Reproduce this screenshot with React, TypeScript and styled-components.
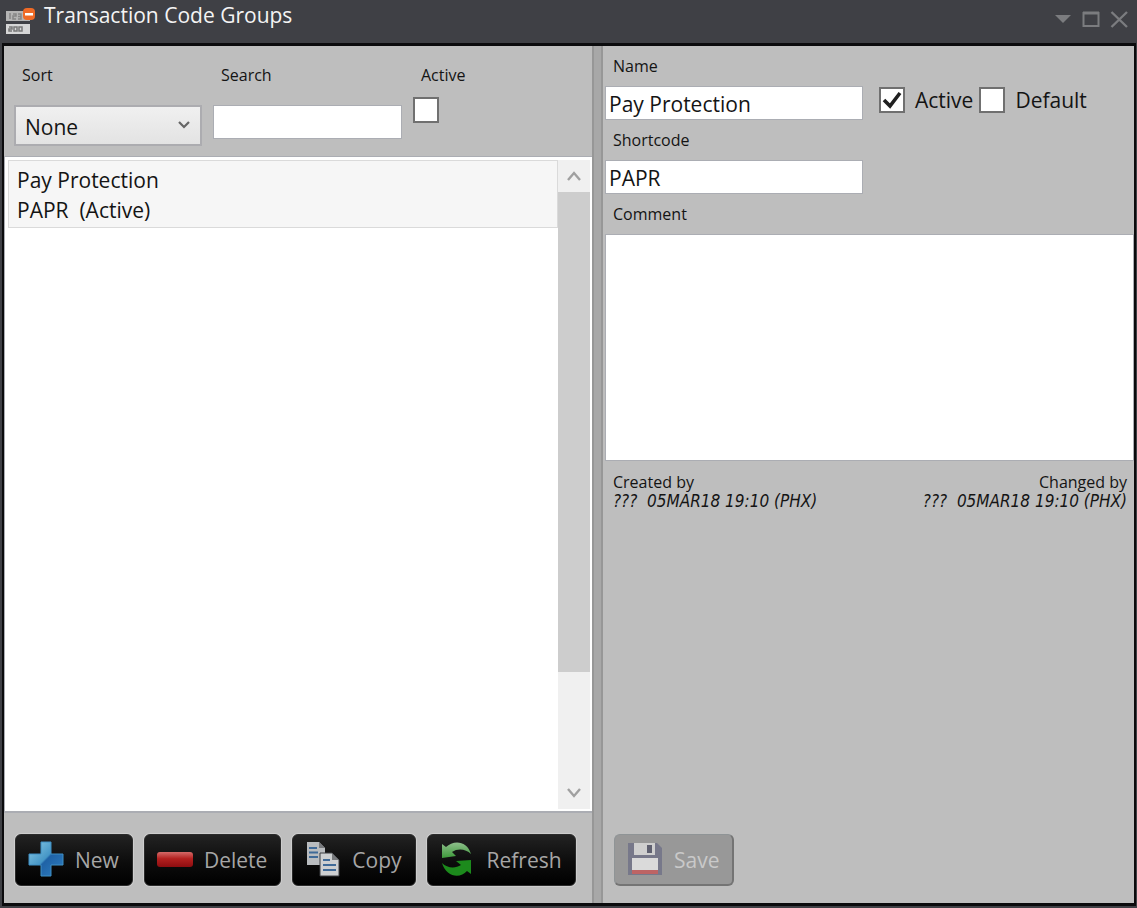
import React, { useState } from "react";
import styled, { createGlobalStyle, css } from "styled-components";

const GlobalStyle = createGlobalStyle`
  *, *::before, *::after { box-sizing: border-box; }
  html, body { margin: 0; padding: 0; background: #3f4045; }
  body, button, input, select, textarea {
    font-family: "Open Sans", "Noto Sans", sans-serif;
    font-size: 21px;
    line-height: 30px;
    color: #141414;
  }
`;

const Window = styled.main`
  display: flex;
  flex-direction: column;
  min-height: 100vh;
  padding: 0 1px 2px 2px;
  background: #3f4045;
`;

const TitleBar = styled.header`
  display: flex;
  align-items: flex-start;
  height: 43px;
  padding: 0 7px 0 4px;
`;

const TitleIcon = styled.svg`
  flex: none;
  width: 31px;
  height: 31px;
  margin-top: 6px;
`;

const Title = styled.h1`
  flex: 1;
  margin: 0;
  padding-left: 7px;
  font-size: 21px;
  font-weight: 400;
  line-height: 30px;
  color: #f4f4f4;
`;

const WindowControls = styled.div`
  display: flex;
  gap: 8px;
  padding-top: 9px;
`;

const ControlButton = styled.button`
  display: flex;
  width: 20px;
  height: 20px;
  padding: 0;
  border: 0;
  background: none;
`;

const Body = styled.div`
  flex: 1;
  display: grid;
  grid-template-columns: minmax(0, 588fr) 11px minmax(0, 531fr);
  border: solid #0b0b0d;
  border-width: 3px 2px 3px 2px;
  background: #bebebe;
`;

const Pane = styled.section`
  display: flex;
  flex-direction: column;
  min-width: 0;
`;

const DetailPane = styled(Pane)`
  padding-left: 2px;
`;

const Splitter = styled.div`
  border: solid #979797;
  border-width: 0 2px;
  background: #a8a8a8;
`;

const Filters = styled.div`
  display: flex;
  align-items: flex-start;
  gap: 11px;
  height: 110px;
  padding: 19px 10px 0;
`;

const FilterField = styled.div<{ $gap: number }>`
  display: flex;
  flex-direction: column;
  align-items: flex-start;
  gap: ${(p) => p.$gap}px;
`;

const SmallLabel = styled.label`
  padding-left: 8px;
  font-size: 16px;
  line-height: 20px;
`;

const SelectWrap = styled.div`
  display: grid;
  align-items: center;
  width: 188px;
  height: 41px;
  border: 2px solid #acacb0;
  background: linear-gradient(#f0f0f0, #e3e3e3);

  select,
  svg {
    grid-area: 1 / 1;
  }

  svg {
    justify-self: end;
    width: 14px;
    height: 10px;
    margin: 0 9px 2px 0;
    pointer-events: none;
  }
`;

const Select = styled.select`
  appearance: none;
  width: 100%;
  height: 37px;
  padding: 3px 28px 0 9px;
  border: 0;
  background: none;
`;

const fieldBox = css`
  border: 1px solid #abadb3;
  border-radius: 0;
  background: #fff;
  outline: none;
`;

const SearchInput = styled.input`
  ${fieldBox}
  width: 189px;
  height: 34px;
  padding: 0 4px;
`;

const TextInput = styled.input`
  ${fieldBox}
  width: 258px;
  height: 34px;
  padding: 1px 3px 0;
`;

const CommentArea = styled.textarea`
  ${fieldBox}
  display: block;
  width: 100%;
  height: 227px;
  padding: 2px 4px;
  resize: none;
`;

const TickBox = styled.input.attrs({ type: "checkbox" })`
  appearance: none;
  flex: none;
  width: 26px;
  height: 26px;
  margin: 0;
  border: 2px solid #707070;
  background: #fff;

  &:checked {
    background: #fff
      url("data:image/svg+xml,%3Csvg xmlns='http://www.w3.org/2000/svg' viewBox='0 0 22 22'%3E%3Cpath d='M3 11 L9 17 L19 4' fill='none' stroke='%23202020' stroke-width='3.6'/%3E%3C/svg%3E")
      center / 100% 100% no-repeat;
  }
`;

const ListBox = styled.div`
  flex: 1;
  display: flex;
  min-height: 240px;
  padding: 3px 2px 2px;
  border: solid #abadb3;
  border-width: 1px 0 2px 1px;
  background: #fff;
`;

const List = styled.ul`
  flex: 1;
  min-width: 0;
  margin: 0;
  padding: 0 0 0 1px;
  list-style: none;
`;

const ListItem = styled.li`
  padding: 4px 8px 2px;
  border: 1px solid #dadada;
  background: #f6f6f6;
  line-height: 30px;
  white-space: pre;
`;

const ScrollBar = styled.div`
  display: flex;
  flex-direction: column;
  flex: none;
  width: 32px;
  background: #f0f0f0;
`;

const ScrollButton = styled.button`
  display: flex;
  align-items: center;
  justify-content: center;
  flex: none;
  height: 32px;
  padding: 0;
  border: 0;
  background: none;
`;

const ScrollTrack = styled.div`
  flex: 1;
  display: flex;
  flex-direction: column;
`;

const ScrollThumb = styled.div`
  flex: 0 0 82%;
  background: #cdcdcd;
`;

const Footer = styled.footer`
  display: flex;
  gap: 11px;
  height: 90px;
  padding: 21px 11px 0;
`;

const DetailFooter = styled(Footer)`
  margin-top: auto;
  padding-left: 9px;
`;

const ActionButton = styled.button`
  display: flex;
  align-items: center;
  gap: 11px;
  height: 52px;
  padding: 0 13px 0 12px;
  border: 1px solid #2b2b2b;
  border-radius: 6px;
  box-shadow: 0 0 0 1px #cdcdcd;
  background: linear-gradient(#222, #0c0c0c 55%, #000);
  color: #a6a6a6;

  svg {
    flex: none;
    width: 36px;
    height: 36px;
    margin-bottom: 2px;
  }

  &:disabled {
    border: solid #8f9496;
    border-width: 1px 2px 2px 1px;
    border-right-color: #747474;
    border-bottom-color: #747474;
    box-shadow: none;
    background: #989898;
    color: #c9c9c9;
  }
`;

const LabelRow = styled.div`
  display: flex;
  align-items: center;
  height: 40px;
`;

const FieldRow = styled.div`
  display: flex;
  align-items: flex-start;
  height: 34px;
`;

const Checks = styled.div`
  display: flex;
  gap: 6px;
  padding-left: 16px;
`;

const CheckLabel = styled.label`
  display: flex;
  align-items: center;
  gap: 10px;
  height: 28px;
`;

const Audit = styled.div`
  display: flex;
  justify-content: space-between;
  padding: 12px 7px 0 8px;
  font-size: 16px;
  line-height: 19px;
`;

const AuditEntry = styled.div<{ $end?: boolean }>`
  display: flex;
  flex-direction: column;
  align-items: ${(p) => (p.$end ? "flex-end" : "flex-start")};

  em {
    font-family: "DejaVu Sans Condensed", "DejaVu Sans", sans-serif;
    font-size: 17px;
    white-space: pre;
  }
`;

const Chevron = ({ up = false }: { up?: boolean }) => (
  <svg width="16" height="12" viewBox="0 0 16 12" aria-hidden="true">
    <path
      d={up ? "M2 10 L8 3 L14 10" : "M2 2 L8 9 L14 2"}
      fill="none"
      stroke="#a0a0a0"
      strokeWidth="2.4"
    />
  </svg>
);

const AppIcon = () => (
  <TitleIcon viewBox="0 0 31 31" aria-hidden="true">
    <rect x="0" y="5" width="24" height="10" fill="#b4b4b4" />
    <rect x="0" y="18" width="24" height="10" fill="#d6d6d6" />
    <path
      d="M4 7v6M7 8h3v2h-3v3h3M12 8h3v5h-3M12 10.500h3"
      fill="none"
      stroke="#858585"
      strokeWidth="1.5"
    />
    <path
      d="M3 21h3v2h-3v2h3M8 21h3v4h-3zM13 21h3v4h-3z"
      fill="none"
      stroke="#777"
      strokeWidth="1.5"
    />
    <rect x="17" y="2" width="12" height="12" rx="4" fill="#ef6a26" />
    <rect x="19" y="7" width="8" height="2.500" fill="#fff" />
  </TitleIcon>
);

const PlusIcon = () => (
  <svg viewBox="0 0 36 36" aria-hidden="true">
    <defs>
      <linearGradient id="plus" x1="0" y1="0" x2="1" y2="1">
        <stop offset="0" stopColor="#8ccbe6" />
        <stop offset=".48" stopColor="#4596c6" />
        <stop offset=".52" stopColor="#1f62a6" />
        <stop offset="1" stopColor="#2f7fc0" />
      </linearGradient>
    </defs>
    <path
      d="M13 1H23V13H35V24H23V35H13V24H1V13H13Z"
      fill="url(#plus)"
      stroke="#3f8fc4"
      strokeWidth="1"
    />
  </svg>
);

const MinusIcon = () => (
  <svg viewBox="0 0 36 36" aria-hidden="true">
    <defs>
      <linearGradient id="minus" x1="0" y1="0" x2="0" y2="1">
        <stop offset="0" stopColor="#d56a68" />
        <stop offset=".45" stopColor="#b3201f" />
        <stop offset="1" stopColor="#8d0d10" />
      </linearGradient>
    </defs>
    <rect x="0" y="11" width="36" height="15" rx="3" fill="url(#minus)" />
  </svg>
);

const CopyIcon = () => (
  <svg viewBox="0 0 36 36" aria-hidden="true">
    <path d="M2 1H14L20 7V24H2Z" fill="#b9bcbf" />
    <path d="M14 1V7H20Z" fill="#77797c" />
    <path d="M4 7H12M4 11.500H13M4 16H13" stroke="#3f6a98" strokeWidth="2" />
    <path
      d="M15 12H27L34 19V35H15Z"
      fill="#cdcfd1"
      stroke="#3c3f43"
      strokeWidth="1"
    />
    <path d="M27 12V19H34Z" fill="#77797c" />
    <path d="M18 19H25M18 24H31M18 29H31" stroke="#3f6a98" strokeWidth="2" />
  </svg>
);

const RefreshIcon = () => (
  <svg viewBox="0 0 36 36" aria-hidden="true">
    <defs>
      <linearGradient id="refreshTop" x1="0" y1="0" x2="0" y2="1">
        <stop offset="0" stopColor="#8fbf8c" />
        <stop offset="1" stopColor="#3d9a3a" />
      </linearGradient>
    </defs>
    <path
      d="M2 3L6 6C13-1 27-1 31 13C26 8 18 7 12 11L16 15L2 17Z"
      fill="url(#refreshTop)"
    />
    <path
      d="M31 33L27 30C20 38 6 36 2 22C7 27 15 28 21 24L16 20L31 19Z"
      fill="#1c8a1c"
    />
  </svg>
);

const SaveIcon = () => (
  <svg viewBox="0 0 36 36" aria-hidden="true">
    <path d="M1 2H30L35 7V34H1Z" fill="#77788a" />
    <rect x="7" y="2" width="21" height="12" fill="#cfcfcf" />
    <rect x="20" y="4" width="5" height="8" fill="#5f6070" />
    <rect x="5" y="17" width="26" height="16" fill="#dadada" />
    <rect x="5" y="29" width="26" height="4" fill="#bd6464" />
  </svg>
);

export default function App() {
  const [sort, setSort] = useState("None");
  const [search, setSearch] = useState("");
  const [onlyActive, setOnlyActive] = useState(false);
  const [name, setName] = useState("Pay Protection");
  const [code, setCode] = useState("PAPR");
  const [comment, setComment] = useState("");
  const [active, setActive] = useState(true);
  const [isDefault, setIsDefault] = useState(false);

  return (
    <>
      <GlobalStyle />
      <Window>
        <TitleBar>
          <AppIcon />
          <Title>Transaction Code Groups</Title>
          <WindowControls>
            <ControlButton aria-label="Menu">
              <svg width="20" height="20" viewBox="0 0 20 20">
                <path d="M2 6H18L10 14Z" fill="#7b7c7f" />
              </svg>
            </ControlButton>
            <ControlButton aria-label="Maximize">
              <svg width="20" height="20" viewBox="0 0 20 20">
                <path
                  d="M2.500 4H17.500V17H2.500Z"
                  fill="none"
                  stroke="#7b7c7f"
                  strokeWidth="2"
                />
                <path d="M2 4H18" stroke="#7b7c7f" strokeWidth="3" />
              </svg>
            </ControlButton>
            <ControlButton aria-label="Close">
              <svg width="20" height="20" viewBox="0 0 20 20">
                <path
                  d="M2.500 3L18 18M18 3L2.500 18"
                  stroke="#7b7c7f"
                  strokeWidth="2.400"
                />
              </svg>
            </ControlButton>
          </WindowControls>
        </TitleBar>

        <Body>
          <Pane>
            <Filters>
              <FilterField $gap={20}>
                <SmallLabel htmlFor="sort">Sort</SmallLabel>
                <SelectWrap>
                  <Select
                    id="sort"
                    value={sort}
                    onChange={(e) => setSort(e.target.value)}
                  >
                    <option>None</option>
                    <option>Name</option>
                    <option>Shortcode</option>
                  </Select>
                  <svg viewBox="0 0 14 10" aria-hidden="true">
                    <path
                      d="M2 2L7 7L12 2"
                      fill="none"
                      stroke="#666"
                      strokeWidth="2.200"
                    />
                  </svg>
                </SelectWrap>
              </FilterField>
              <FilterField $gap={20}>
                <SmallLabel htmlFor="search">Search</SmallLabel>
                <SearchInput
                  id="search"
                  value={search}
                  onChange={(e) => setSearch(e.target.value)}
                />
              </FilterField>
              <FilterField $gap={12}>
                <SmallLabel htmlFor="only-active">Active</SmallLabel>
                <TickBox
                  id="only-active"
                  checked={onlyActive}
                  onChange={(e) => setOnlyActive(e.target.checked)}
                />
              </FilterField>
            </Filters>

            <ListBox>
              <List>
                <ListItem>
                  <div>Pay Protection</div>
                  <div>{"PAPR  (Active)"}</div>
                </ListItem>
              </List>
              <ScrollBar>
                <ScrollButton aria-label="Scroll up">
                  <Chevron up />
                </ScrollButton>
                <ScrollTrack>
                  <ScrollThumb />
                </ScrollTrack>
                <ScrollButton aria-label="Scroll down">
                  <Chevron />
                </ScrollButton>
              </ScrollBar>
            </ListBox>

            <Footer>
              <ActionButton>
                <PlusIcon />
                New
              </ActionButton>
              <ActionButton>
                <MinusIcon />
                Delete
              </ActionButton>
              <ActionButton>
                <CopyIcon />
                Copy
              </ActionButton>
              <ActionButton>
                <RefreshIcon />
                Refresh
              </ActionButton>
            </Footer>
          </Pane>

          <Splitter />

          <DetailPane>
            <LabelRow>
              <SmallLabel htmlFor="name">Name</SmallLabel>
            </LabelRow>
            <FieldRow>
              <TextInput
                id="name"
                value={name}
                onChange={(e) => setName(e.target.value)}
              />
              <Checks>
                <CheckLabel>
                  <TickBox
                    checked={active}
                    onChange={(e) => setActive(e.target.checked)}
                  />
                  Active
                </CheckLabel>
                <CheckLabel>
                  <TickBox
                    checked={isDefault}
                    onChange={(e) => setIsDefault(e.target.checked)}
                  />
                  Default
                </CheckLabel>
              </Checks>
            </FieldRow>
            <LabelRow>
              <SmallLabel htmlFor="shortcode">Shortcode</SmallLabel>
            </LabelRow>
            <FieldRow>
              <TextInput
                id="shortcode"
                value={code}
                onChange={(e) => setCode(e.target.value)}
              />
            </FieldRow>
            <LabelRow>
              <SmallLabel htmlFor="comment">Comment</SmallLabel>
            </LabelRow>
            <CommentArea
              id="comment"
              value={comment}
              onChange={(e) => setComment(e.target.value)}
            />
            <Audit>
              <AuditEntry>
                <span>Created by</span>
                <em>{"???  05MAR18 19:10 (PHX)"}</em>
              </AuditEntry>
              <AuditEntry $end>
                <span>Changed by</span>
                <em>{"???  05MAR18 19:10 (PHX)"}</em>
              </AuditEntry>
            </Audit>
            <DetailFooter>
              <ActionButton disabled>
                <SaveIcon />
                Save
              </ActionButton>
            </DetailFooter>
          </DetailPane>
        </Body>
      </Window>
    </>
  );
}
